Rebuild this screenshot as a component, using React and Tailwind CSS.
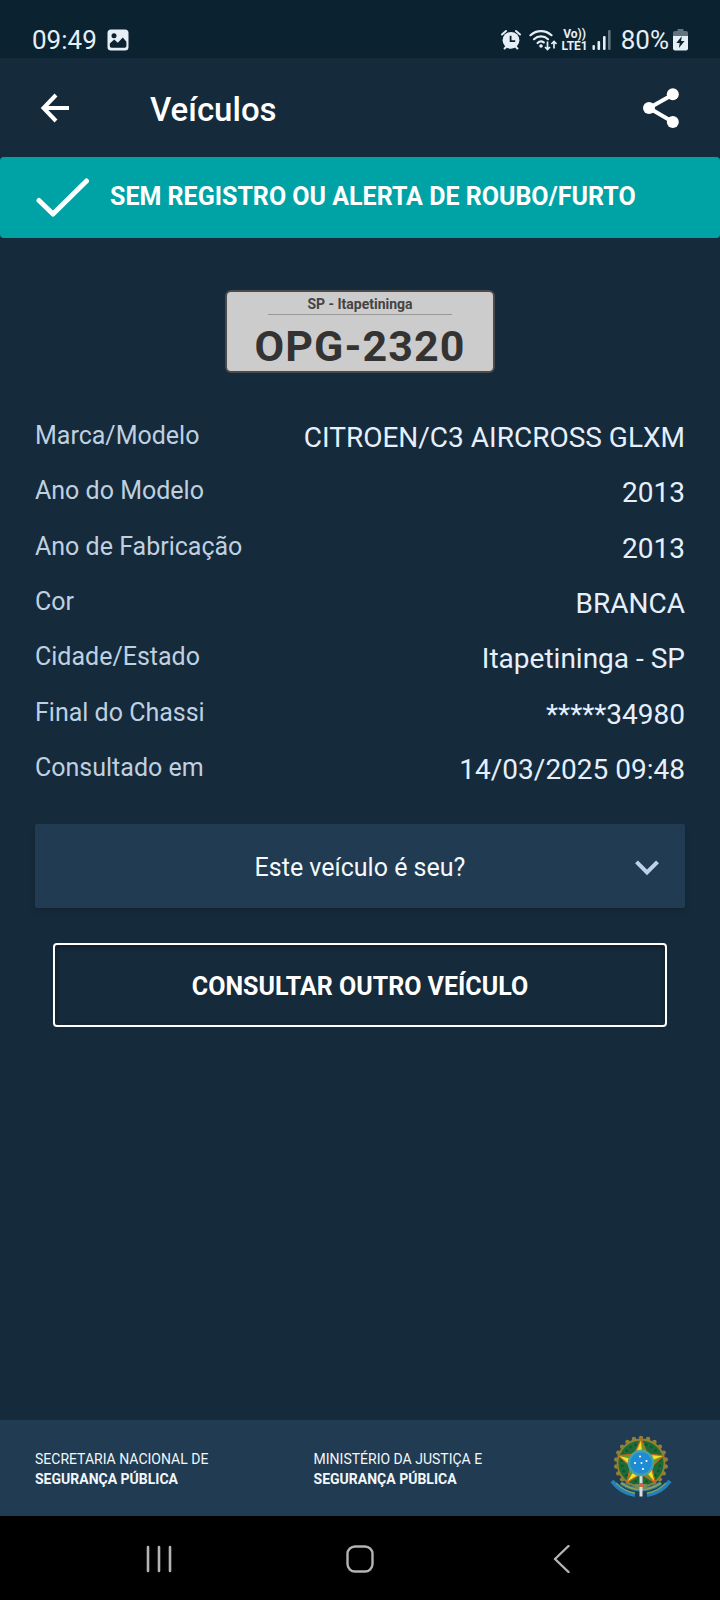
const details = [
  { label: 'Marca/Modelo', value: 'CITROEN/C3 AIRCROSS GLXM' },
  { label: 'Ano do Modelo', value: '2013' },
  { label: 'Ano de Fabricação', value: '2013' },
  { label: 'Cor', value: 'BRANCA' },
  { label: 'Cidade/Estado', value: 'Itapetininga - SP' },
  { label: 'Final do Chassi', value: '*****34980' },
  { label: 'Consultado em', value: '14/03/2025 09:48' },
];

function StatusBar() {
  return (
    <div className="flex h-[58px] items-end justify-between bg-[#0b2231] px-8 pb-0.5 text-[26px] leading-8 text-[#e6eff5]">
      <div className="flex items-center gap-2.5">
        <span>09:49</span>
        <svg width="22" height="22" viewBox="0 0 22 22" aria-hidden="true">
          <rect x="0.5" y="0.5" width="21" height="21" rx="3.5" fill="currentColor" />
          <circle cx="7" cy="6.8" r="2.5" fill="#0b2231" />
          <path d="M2.8 17v-2.6l4.4-4 3.6 3.4 5-5.2 3.6 4.2V17a1.8 1.8 0 0 1-1.8 1.8h-13A1.8 1.8 0 0 1 2.8 17z" fill="#0b2231" />
        </svg>
      </div>

      <div className="flex items-center">
        <svg className="mr-2" width="20" height="22" viewBox="0 0 20 22" aria-hidden="true">
          <circle cx="10" cy="11.3" r="8.4" fill="currentColor" />
          <path d="M1 5.5 5 2M19 5.5 15 2M3.6 19.5l2-2.2M16.4 19.5l-2-2.2" stroke="currentColor" strokeWidth="2" strokeLinecap="round" />
          <path d="M9.6 6.8v5.4h4.6" fill="none" stroke="#0b2231" strokeWidth="1.8" />
        </svg>
        <svg className="mr-1" width="28" height="22" viewBox="0 0 28 22" aria-hidden="true">
          <g fill="none" stroke="currentColor" strokeWidth="2.2" strokeLinecap="round">
            <path d="M1.5 6.2a15.5 15.5 0 0 1 21 0" />
            <path d="M5 10.2a10.3 10.3 0 0 1 14 0" />
            <path d="M8.6 14a5 5 0 0 1 6.2-.6" />
          </g>
          <circle cx="12" cy="17" r="1.8" fill="currentColor" />
          <g fill="none" stroke="currentColor" strokeWidth="1.7">
            <path d="M18.5 12.5v8M16 18l2.5 2.6L21 18" />
            <path d="M25 19.5v-7M22.4 15l2.6-2.6 2.6 2.6" />
          </g>
        </svg>
        <div className="mr-1 flex flex-col items-center text-[12px] leading-3 font-bold">
          <span>Vo))</span>
          <span>LTE1</span>
        </div>
        <svg className="mr-2.5" width="19" height="20" viewBox="0 0 19 20" fill="currentColor" aria-hidden="true">
          <rect x="0.5" y="15" width="2.4" height="5" rx="1" />
          <rect x="5.5" y="11" width="2.6" height="9" rx="1" />
          <rect x="11" y="6" width="2.6" height="14" rx="1" />
          <rect x="16" y="0" width="2.6" height="20" rx="1" opacity="0.4" />
        </svg>
        <span className="mr-1">80%</span>
        <svg width="15" height="22" viewBox="0 0 15 22" aria-hidden="true">
          <path d="M4.5 0h6v2H13a2 2 0 0 1 2 2v4H0V4a2 2 0 0 1 2-2h2.5z" fill="currentColor" opacity="0.4" />
          <path d="M0 7h15v12.5a2 2 0 0 1-2 2H2a2 2 0 0 1-2-2z" fill="currentColor" />
          <path d="M8.8 7.2 3.3 14h3.4l-.8 5L11.6 12H8.1z" fill="#0b2231" />
        </svg>
      </div>
    </div>
  );
}

function Header() {
  return (
    <header className="flex h-[99px] items-center px-[35px] text-white">
      <button type="button" aria-label="Voltar" className="flex h-10 w-10 items-center justify-center">
        <svg width="30" height="30" viewBox="0 0 30 30" fill="none" stroke="currentColor" strokeWidth="4" aria-hidden="true">
          <path d="M29 15H4M16 2 3.5 15 16 28" />
        </svg>
      </button>
      <h1 className="ml-[75px] flex-1 pt-1 text-[33px] leading-10 font-medium">Veículos</h1>
      <button type="button" aria-label="Compartilhar" className="flex h-10 w-12 items-center justify-center">
        <svg width="36" height="40" viewBox="0 0 36 40" aria-hidden="true">
          <path d="M30 6.5 6 20l24 14" fill="none" stroke="currentColor" strokeWidth="4" />
          <g fill="currentColor">
            <circle cx="29.8" cy="6.3" r="6" />
            <circle cx="6" cy="20" r="6" />
            <circle cx="29.8" cy="34" r="6" />
          </g>
        </svg>
      </button>
    </header>
  );
}

function Plate() {
  return (
    <div className="mx-auto mt-[52px] flex h-[83px] w-[270px] flex-col items-center rounded-md border-2 border-[#4b4b4b] bg-[#cccccc] text-[#333333]">
      <p className="w-[184px] border-b border-[#999999] pt-1 pb-0.5 text-center text-[14px] leading-4 font-bold text-[#444444]">
        SP - Itapetininga
      </p>
      <p className="mt-1.5 text-[43px] leading-[50px] font-bold tracking-wide">OPG-2320</p>
    </div>
  );
}

// Points on a circle around the centre of the arms, 0deg at the top.
const CX = 31;
const CY = 29;
const polar = (r, deg) => {
  const a = ((deg - 90) * Math.PI) / 180;
  return `${(CX + r * Math.cos(a)).toFixed(2)},${(CY + r * Math.sin(a)).toFixed(2)}`;
};

function CoatOfArms() {
  const tips = [0, 72, 144, 216, 288];
  const beads = Array.from({ length: 22 }, (_, i) => (i * 360) / 22);
  return (
    <svg width="62" height="64" viewBox="0 0 62 64" role="img" aria-label="Brasão da República">
      {beads.map((deg) => {
        const [x, y] = polar(25, deg).split(',');
        return <circle key={deg} cx={x} cy={y} r="2.2" fill="#8f8238" />;
      })}
      <circle cx={CX} cy={CY} r="23.5" fill="#1d6b38" stroke="#96802f" strokeWidth="1.8" />
      {beads.map((deg) => {
        const [x, y] = polar(19, deg).split(',');
        return <circle key={deg} cx={x} cy={y} r="1.5" fill="#0f5a2c" />;
      })}
      {tips.map((deg) => (
        <g key={deg} stroke="#c2661f" strokeWidth="1.3" strokeLinejoin="round">
          <polygon points={`${CX},${CY} ${polar(24, deg)} ${polar(11, deg - 36)}`} fill="#ecd822" />
          <polygon points={`${CX},${CY} ${polar(24, deg)} ${polar(11, deg + 36)}`} fill="#5d9c33" />
          <polygon points={`${polar(23, deg)} ${polar(11, deg - 20)} ${polar(11, deg + 5)}`} fill="#f5e02a" stroke="none" />
        </g>
      ))}
      <g fill="none">
        <path d="M2 47q9 12 23 14" stroke="#2380bd" strokeWidth="4" />
        <path d="M60 47q-9 12-23 14" stroke="#2380bd" strokeWidth="4" />
        <path d="M6 49q9 9 19 10M56 49q-9 9-19 10" stroke="#74a06a" strokeWidth="1.5" />
        <path d="M11 49q20 13 40 0" stroke="#2a7898" strokeWidth="4" />
        <path d="M11 49q20 13 40 0" stroke="#92a350" strokeWidth="1.8" />
      </g>
      <rect x="25" y="50" width="12" height="5" fill="#7a8858" />
      <rect x="29.5" y="41" width="3" height="21.5" fill="#d9dedf" />
      <rect x="29" y="49" width="4" height="4" fill="#c96a45" />
      <circle cx={CX} cy={CY} r="12" fill="#1e8cd4" stroke="#46a0a4" strokeWidth="2.5" />
      <g fill="#ffffff">
        <circle cx="30" cy="22.5" r="1" />
        <circle cx="25" cy="29" r="1.1" />
        <circle cx="31.5" cy="29" r="1" />
        <circle cx="36.5" cy="27" r="1" />
        <circle cx="33" cy="35" r="1.1" />
      </g>
    </svg>
  );
}

function Footer() {
  return (
    <footer className="grid h-24 grid-cols-[3fr_3fr_1fr] items-center bg-[#203b52] px-[35px] text-[14px] leading-5 text-[#f2f7fa]">
      <p className="pt-0.5">
        SECRETARIA NACIONAL DE
        <br />
        <strong>SEGURANÇA PÚBLICA</strong>
      </p>
      <p className="pt-0.5">
        MINISTÉRIO DA JUSTIÇA E
        <br />
        <strong>SEGURANÇA PÚBLICA</strong>
      </p>
      <div className="flex justify-center pb-1 pl-1">
        <CoatOfArms />
      </div>
    </footer>
  );
}

function SystemNav() {
  return (
    <nav className="grid h-[84px] grid-cols-3 bg-black px-[58px] pt-0.5 text-[#b4b4b4]">
      <button type="button" aria-label="Recentes" className="flex items-center justify-center">
        <svg width="28" height="28" viewBox="0 0 28 28" fill="none" stroke="currentColor" strokeWidth="2.6" strokeLinecap="round" aria-hidden="true">
          <path d="M3 2v24M14 2v24M25 2v24" />
        </svg>
      </button>
      <button type="button" aria-label="Início" className="flex items-center justify-center">
        <svg width="28" height="28" viewBox="0 0 28 28" fill="none" stroke="currentColor" strokeWidth="2.4" aria-hidden="true">
          <rect x="1.5" y="1.5" width="25" height="25" rx="7.5" />
        </svg>
      </button>
      <button type="button" aria-label="Voltar à tela anterior" className="flex items-center justify-center">
        <svg width="18" height="28" viewBox="0 0 18 28" fill="none" stroke="currentColor" strokeWidth="2.4" strokeLinecap="round" strokeLinejoin="round" aria-hidden="true">
          <path d="M16.5 1 3 14l13.5 13" />
        </svg>
      </button>
    </nav>
  );
}

export default function App() {
  return (
    <div className="flex min-h-screen flex-col bg-[#152a3a] font-[Roboto,sans-serif]">
      <StatusBar />
      <Header />

      <main className="flex-1">
        <div role="status" className="flex h-[81px] items-center gap-5 rounded bg-[#00a3a5] px-9 text-white">
          <svg width="54" height="40" viewBox="0 0 54 40" fill="none" stroke="currentColor" strokeWidth="5" strokeLinecap="round" strokeLinejoin="round" aria-hidden="true">
            <path d="M3 22.5 17 36 50.5 3" />
          </svg>
          <p className="pb-0.5 text-[25px] leading-8 font-bold">SEM REGISTRO OU ALERTA DE ROUBO/FURTO</p>
        </div>

        <Plate />

        <dl className="mt-[37px] grid h-[388px] auto-rows-fr px-[35px]">
          {details.map(({ label, value }) => (
            <div key={label} className="flex items-center justify-between">
              <dt className="pb-1 text-[25px] leading-8 text-[#bfd0e0]">{label}</dt>
              <dd className="text-[28px] leading-8 text-[#e6effc]">{value}</dd>
            </div>
          ))}
        </dl>

        <div className="mt-[26px] px-[35px]">
          <button
            type="button"
            aria-expanded="false"
            className="grid h-[84px] w-full grid-cols-[24px_1fr_24px] items-center rounded-xs bg-[#203b52] px-[26px] pt-1 text-[25px] leading-8 text-[#f5f9fc] shadow-md"
          >
            <span className="col-start-2">Este veículo é seu?</span>
            <svg width="24" height="16" viewBox="0 0 24 16" fill="none" stroke="#bdd2e8" strokeWidth="4" aria-hidden="true">
              <path d="M1.5 1.8 12 12.3 22.5 1.8" />
            </svg>
          </button>
        </div>

        <div className="mt-[35px] px-[53px]">
          <button
            type="button"
            className="h-[84px] w-full rounded border-2 border-white pt-1 text-[25px] leading-8 font-bold text-white inset-shadow-sm inset-shadow-black/40"
          >
            CONSULTAR OUTRO VEÍCULO
          </button>
        </div>
      </main>

      <Footer />
      <SystemNav />
    </div>
  );
}
